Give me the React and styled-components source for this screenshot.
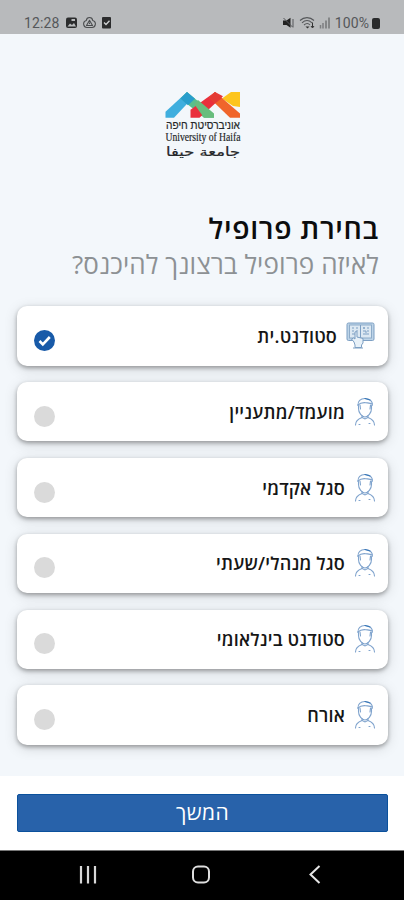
import React, { useState } from "react";
import styled, { createGlobalStyle } from "styled-components";

const profiles = [
  { id: "student", label: "סטודנט.ית", icon: "student" },
  { id: "candidate", label: "מועמד/מתעניין", icon: "person" },
  { id: "academic", label: "סגל אקדמי", icon: "person" },
  { id: "staff", label: "סגל מנהלי/שעתי", icon: "person" },
  { id: "international", label: "סטודנט בינלאומי", icon: "person" },
  { id: "guest", label: "אורח", icon: "person" },
];

const StatusIconsLeft = () => (
  <svg width="48" height="14" viewBox="0 0 48 14">
    <rect x="1" y="1.5" width="11" height="10.5" rx="2" fill="#2b2c2d" />
    <path d="M2.5 10.5 5 7.5l2 1.5 2-2 2 3.5z" fill="#b8babc" />
    <rect x="6.5" y="3" width="3.5" height="2" fill="#b8babc" />
    <g fill="none" stroke="#4b4d4f" strokeWidth="1.1" strokeLinejoin="round">
      <path d="M24.5 1.5c2 0 3 1.2 3.2 3 2 .7 3 2.3 2.6 4.2-.4 2-2 3-3.8 2.8h-4c-1.8.2-3.4-.8-3.8-2.8-.4-1.9.6-3.5 2.6-4.2.2-1.8 1.2-3 3.2-3z" />
      <path d="M24.5 4.3 27.500 9.500h-6z" />
      <path d="M24.500 6.500V8" />
    </g>
    <rect x="37" y="1" width="9" height="11.500" rx="1" fill="#2b2c2d" />
    <path d="m39 6.500 2 2 3.500-3.800" fill="none" stroke="#d0d2d3" strokeWidth="1.300" />
  </svg>
);

const StatusIconsRight = () => (
  <svg width="50" height="14" viewBox="0 0 50 14">
    <path d="M1 4.500h3.500L8.500 1.800v10L4.500 9H1z" fill="#222" />
    <path d="m1.500 2 9.500 9.500M11 3v8" stroke="#55575a" strokeWidth="1" />
    <g fill="none" stroke="#55575a" strokeWidth="1.100">
      <path d="M18 4.500c4-3.800 10-3.800 14 0" />
      <path d="M20 6.800c3-2.700 7-2.700 10 0" />
      <path d="M22 9c2-1.700 4.500-1.700 6 0" />
    </g>
    <path d="M23.500 10.500 25.500 12.500 27.500 10.500z" fill="#333" />
    <path d="M30.500 6.500v5M29 10l1.500 2 1.500-2" fill="none" stroke="#333" />
    <path d="M38.500 9v3.500M41 7v5.500" stroke="#7c7e80" strokeWidth="1.500" />
    <path d="M44 4.500v8M47 1.500v11" stroke="#626466" strokeWidth="1.200" />
  </svg>
);

const Logo = () => (
  <svg width="80" height="70" viewBox="-1 0 80 70">
    <g transform="scale(1 1.07)">
      <path d="M1.500 19.500V25H10L28 7l-5-6z" fill="#3faede" />
      <path d="m23 1 27 21v3H40L16.500 7z" fill="#58bf8d" />
      <path d="M16.500 7 23 1l8 6.200-7 6.200z" fill="#289dcc" />
      <path d="M26.500 17.500V25h9L59 5l-8-4z" fill="#e92f3c" />
      <path d="m30 12 4-3.500L50 21v4H40z" fill="#68bd7d" />
      <path d="M58 7 67 1h9v14l-7-1z" fill="#fdc51d" />
      <path d="m45 6 6-5 25 20v4H66z" fill="#f0652b" />
      <path d="m45 6 6-5 7 5.600-7 5z" fill="#e43b35" />
    </g>
    <g fill="#252729" stroke="#252729" strokeWidth="0.200" fontFamily="Liberation Serif, serif">
      <text x="2" y="38" fontSize="11.500" fontFamily="Liberation Sans, sans-serif" textLength="74" lengthAdjust="spacingAndGlyphs">אוניברסיטת חיפה</text>
      <text x="1.500" y="50" fontSize="12" textLength="75" lengthAdjust="spacingAndGlyphs">University of Haifa</text>
      <text x="2" y="64.500" fontSize="12.500" fontFamily="DejaVu Sans, sans-serif" textLength="74" lengthAdjust="spacingAndGlyphs">جامعة حيفا</text>
    </g>
  </svg>
);

const StudentIcon = () => (
  <svg width="30" height="30" viewBox="0 0 30 30" fill="none" stroke="#7d9fc3" strokeWidth="1">
    <rect x="1" y="2" width="27" height="17.500" rx="1.500" fill="#bdd4e8" />
    <rect x="3.500" y="4" width="22" height="13" fill="#dce8f2" stroke="#8eacc9" />
    <path d="M14.500 4v13M6 7h2m2 0h2M6 10h2m2 0h2M6 13h3m8-6h2m2 0h2m-6 3h3m1 0h2m-6 3h2m2 0h2m-5-7v2m2 2v4" />
    <path d="M8 21 5.500 18l2-1 1.500 1v-7q1.200-1 2 0v5l6 1.500v4.500l-1.500 2v2.500H9V24z" fill="#e8f1f8" />
    <path d="M7 27h10" />
  </svg>
);

const PersonIcon = () => (
  <svg width="22" height="30" viewBox="0 0 22 30" fill="none" stroke="#7fa3cd" strokeWidth="1.100" strokeLinecap="round">
    <path d="M4 8.500C3.500 4 6.500 1.500 11 1.500s8 2.500 7.200 7" />
    <path d="M3.800 8c2.500-2.200 4.700-2.700 8-2.300 2.600.3 4.500.2 6.400 1.300" />
    <path d="M4.500 8.500v3c0 4.500 3.500 8.500 6.500 8.500s6.500-4 6.500-8.500v-3M6 8l.5 4M16.500 8l-.5 4" />
    <path d="M8 18.500v2l3 1.500 3-1.500v-2" />
    <path d="M8 20.500C4 22 1.500 23.500 1.500 28M14 20.500c4 1.500 6.500 3 6.500 7.500M5 27.500h1m9-1h1" />
    <path d="m11 1.500 5 1.500" stroke="#3575b7" />
  </svg>
);

const App = () => {
  const [selected, setSelected] = useState("student");

  return (
    <>
      <GlobalStyle />
      <Screen>
        <StatusBar>
          <StatusGroup $gap="6px">
            <StatusText>12:28</StatusText>
            <StatusIconsLeft />
          </StatusGroup>
          <StatusGroup $gap="3px">
            <StatusIconsRight />
            <StatusText>100%</StatusText>
            <Battery />
          </StatusGroup>
        </StatusBar>
        <Content dir="rtl">
          <LogoRow dir="ltr">
            <Logo />
          </LogoRow>
          <Title>בחירת פרופיל</Title>
          <Subtitle>לאיזה פרופיל ברצונך להיכנס?</Subtitle>
          <ProfileList>
            {profiles.map((item) => (
              <ProfileCard key={item.id} onClick={() => setSelected(item.id)}>
                {item.icon === "student" ? <StudentIcon /> : <PersonIcon />}
                <Label>{item.label}</Label>
                <Radio $checked={selected === item.id}>
                  {selected === item.id && (
                    <svg width="21" height="21" viewBox="0 0 21 21">
                      <path d="m5.500 11 3.300 3.300 7-7.300" fill="none" stroke="#fff" strokeWidth="2.600" />
                    </svg>
                  )}
                </Radio>
              </ProfileCard>
            ))}
          </ProfileList>
        </Content>
        <Footer>
          <ContinueButton>המשך</ContinueButton>
        </Footer>
        <NavBar>
          <svg width="18" height="20" viewBox="0 0 18 20" stroke="#d8d8d8" strokeWidth="2.200">
            <path d="M2 1v17.500M9 1v17.500M16 1v17.500" />
          </svg>
          <svg width="20" height="20" viewBox="0 0 20 20">
            <rect x="2" y="1.500" width="16" height="16" rx="5" fill="none" stroke="#dedede" strokeWidth="2" />
          </svg>
          <svg width="14" height="20" viewBox="0 0 14 20">
            <path d="m11.500 1-9 8.500 9 8.500" fill="none" stroke="#e6e6e6" strokeWidth="2" />
          </svg>
        </NavBar>
      </Screen>
    </>
  );
};

export default App;

const GlobalStyle = createGlobalStyle`
  * {
    box-sizing: border-box;
  }
  body {
    margin: 0;
    font-family: "Open Sans", "Noto Sans", "Liberation Sans", sans-serif;
  }
  svg {
    display: block;
    flex-shrink: 0;
    overflow: visible;
  }
`;

const Screen = styled.div`
  display: flex;
  flex-direction: column;
  width: 404px;
  height: 900px;
  overflow: hidden;
  background: #f3f7fb;
`;

const StatusBar = styled.div`
  display: flex;
  justify-content: space-between;
  align-items: center;
  height: 34px;
  padding: 12px 24px 0 24px;
  background: #b8babc;
`;

const StatusGroup = styled.div`
  display: flex;
  align-items: center;
  gap: ${({ $gap }) => $gap};
`;

const StatusText = styled.span`
  font-family: Roboto, sans-serif;
  font-size: 14px;
  line-height: 16px;
  letter-spacing: 0.1px;
  color: #55575a;
`;

const Battery = styled.span`
  width: 8px;
  height: 11px;
  border-radius: 2px;
  background: #2a2b2c;
`;

const Content = styled.main`
  display: flex;
  flex-direction: column;
  height: 742px;
  padding: 57px 16px 0 17px;
`;

const LogoRow = styled.div`
  display: flex;
  justify-content: center;
  height: 119px;
`;

const Title = styled.h1`
  margin: 0;
  padding-right: 9px;
  font-size: 28.5px;
  font-weight: 600;
  line-height: 36px;
  letter-spacing: 0.7px;
  color: #0b0c0d;
  white-space: nowrap;
`;

const Subtitle = styled.p`
  margin: 0;
  padding-right: 9px;
  font-size: 26px;
  line-height: 36px;
  letter-spacing: 0.1px;
  color: #8d9194;
  white-space: nowrap;
`;

const ProfileList = styled.div`
  display: flex;
  flex-direction: column;
  gap: 16.4px;
  margin-top: 24px;
`;

const ProfileCard = styled.div`
  display: flex;
  align-items: center;
  height: 59.5px;
  padding: 0 12px 0 17px;
  border-radius: 10px;
  background: #fff;
  box-shadow: 0 2px 4px rgba(0, 0, 0, 0.32), 0 3px 14px rgba(0, 0, 0, 0.14);
  cursor: pointer;
`;

const Label = styled.span`
  flex: 1;
  margin-right: 9px;
  font-size: 18px;
  font-weight: 600;
  line-height: 24px;
  letter-spacing: 0.2px;
  color: #161616;
`;

const Radio = styled.span`
  width: 21px;
  height: 21px;
  margin-top: 9px;
  border-radius: 50%;
  background: ${({ $checked }) => ($checked ? "#185aa8" : "#dadada")};
`;

const Footer = styled.div`
  height: 74px;
  padding: 18px 16px 0 17px;
  background: #fff;
`;

const ContinueButton = styled.button`
  display: block;
  width: 100%;
  height: 38px;
  padding: 0 0 3px;
  border: 1px solid #0b519c;
  border-radius: 2px;
  background: #2862aa;
  color: #fff;
  font-family: inherit;
  font-size: 21px;
  line-height: 32px;
  letter-spacing: 0.4px;
`;

const NavBar = styled.nav`
  display: grid;
  grid-template-columns: 112px 117px 14px;
  height: 50px;
  padding: 14px 0 0 79px;
  border-top: 1px solid #777;
  background: #000;
`;
